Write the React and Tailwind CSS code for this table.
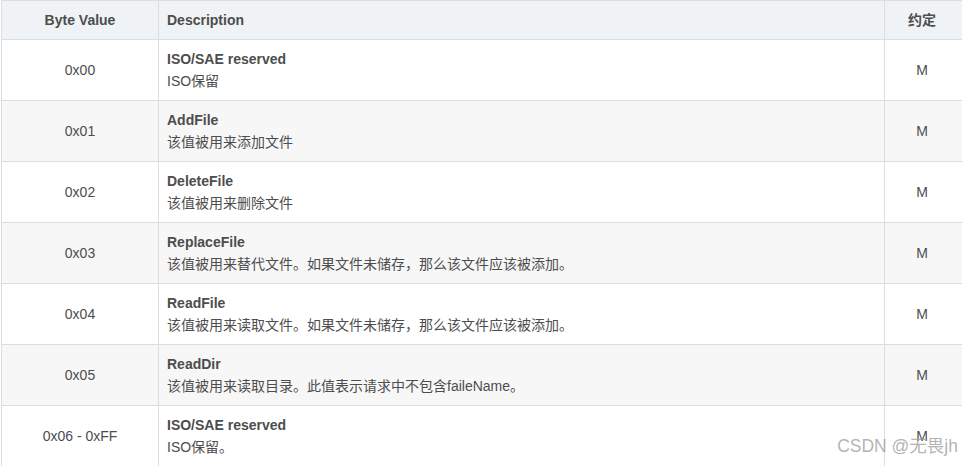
import React from 'react';

const rows = [
  { value: '0x00', title: 'ISO/SAE reserved', desc: 'ISO保留' },
  { value: '0x01', title: 'AddFile', desc: '该值被用来添加文件' },
  { value: '0x02', title: 'DeleteFile', desc: '该值被用来删除文件' },
  { value: '0x03', title: 'ReplaceFile', desc: '该值被用来替代文件。如果文件未储存，那么该文件应该被添加。' },
  { value: '0x04', title: 'ReadFile', desc: '该值被用来读取文件。如果文件未储存，那么该文件应该被添加。' },
  { value: '0x05', title: 'ReadDir', desc: '该值被用来读取目录。此值表示请求中不包含faileName。' },
  { value: '0x06 - 0xFF', title: 'ISO/SAE reserved', desc: 'ISO保留。' },
];

export default function App() {
  return (
    <div
      className="relative w-[962px] h-[466px] overflow-hidden bg-white text-[14px] leading-[22px] text-[#4d4d4d]"
      style={{ fontFamily: '"Liberation Sans", Arial, "Noto Sans CJK SC", sans-serif' }}
    >
      <div className="ml-px w-[970px] border-l border-t border-[#dddddd]">
        {/* header */}
        <div className="grid grid-cols-[157px_726px_1fr] bg-[#eff3f5] font-bold">
          <div className="h-[39px] flex items-center justify-center border-r border-b border-[#dddddd]">Byte Value</div>
          <div className="h-[39px] flex items-center pl-2 border-r border-b border-[#dddddd]">Description</div>
          <div className="h-[39px] flex items-center justify-center border-b border-[#dddddd] pr-[12px]">约定</div>
        </div>

        {/* body rows */}
        {rows.map((row, i) => (
          <div
            key={i}
            className={`grid grid-cols-[157px_726px_1fr] ${i % 2 === 1 ? 'bg-[#f7f7f7]' : 'bg-white'}`}
          >
            <div className="h-[61px] flex items-center justify-center border-r border-b border-[#dddddd]">{row.value}</div>
            <div className="h-[61px] pl-2 pt-2 border-r border-b border-[#dddddd]">
              <div className="font-bold">{row.title}</div>
              <div>{row.desc}</div>
            </div>
            <div className="h-[61px] flex items-center justify-center border-b border-[#dddddd] pr-[12px]">M</div>
          </div>
        ))}
      </div>

      {/* watermark */}
      <div className="absolute right-[4px] top-[435px] text-[17.5px] leading-[22px] text-[#a0a0a0]/80">
        CSDN @无畏jh
      </div>
    </div>
  );
}
